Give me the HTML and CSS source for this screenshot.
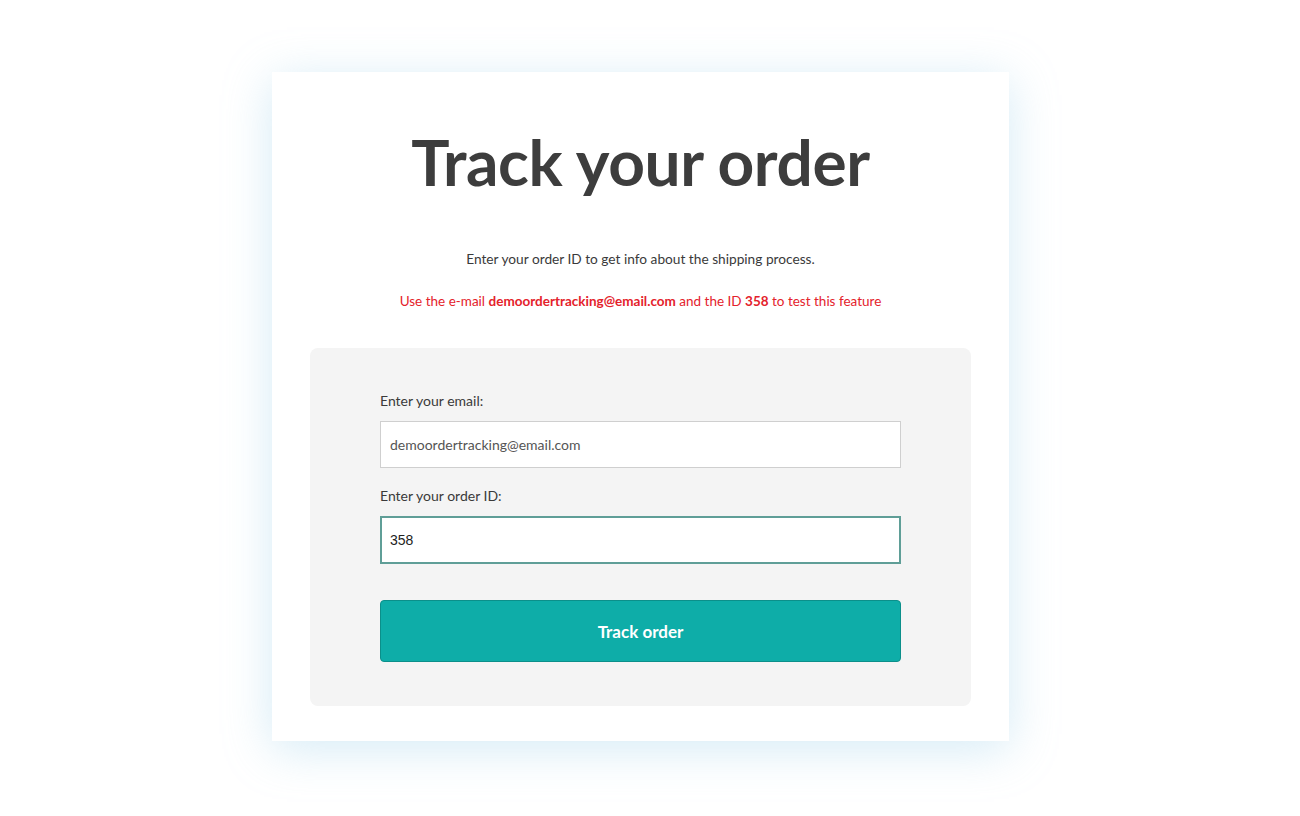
FILE: index.html
```html
<!DOCTYPE html>
<html lang="en">
<head>
    <meta charset="UTF-8">
    <meta name="viewport" content="width=device-width, initial-scale=1.0">
    <title>Track your order</title>
    <link rel="stylesheet" href="styles.css">
</head>
<body>
    <div class="page">
        <div class="card">
            <h1 class="title">Track your order</h1>
            <p class="intro">Enter your order ID to get info about the shipping process.</p>
            <p class="demo-note">Use the e-mail <strong>demoordertracking@email.com</strong> and the ID <strong>358</strong> to test this feature</p>

            <form class="track-form">
                <div class="form-group">
                    <label for="email">Enter your email:</label>
                    <input type="email" id="email" value="demoordertracking@email.com">
                </div>
                <div class="form-group">
                    <label for="orderId">Enter your order ID:</label>
                    <input type="text" id="orderId" class="is-focused" value="358">
                </div>
                <button type="submit" class="track-btn">Track order</button>
            </form>
        </div>
    </div>
</body>
</html>
```

FILE: styles.css
```css
:root {
    --text-dark: #3d3d3d;
    --text-body: #3a3a3a;
    --demo-red: #e4222b;
    --panel-bg: #f4f4f4;
    --teal: #0eada8;
    --teal-border: #0b8f8a;
    --focus-border: #5f9e97;
}

body {
    margin: 0;
    background-color: #ffffff;
    font-family: Lato, "Open Sans", sans-serif;
    color: var(--text-body);
}

.page {
    display: flex;
    justify-content: flex-start;
    padding: 72px 0 75px 272px;
}

.card {
    width: 737px;
    height: 669px;
    box-sizing: border-box;
    padding: 0 38px;
    background-color: #ffffff;
    box-shadow: 0 8px 44px rgba(150, 205, 232, 0.4);
}

.title {
    margin: 58px 0 0;
    text-align: center;
    font-size: 64px;
    line-height: 64px;
    font-weight: 700;
    letter-spacing: -0.4px;
    color: var(--text-dark);
}

.intro {
    margin: 56px 0 0;
    text-align: center;
    font-size: 13.7px;
    line-height: 18px;
}

.demo-note {
    margin: 24px 0 0;
    text-align: center;
    font-size: 13.5px;
    line-height: 18px;
    color: var(--demo-red);
}

.demo-note strong {
    font-weight: 700;
}

.track-form {
    margin-top: 38px;
    padding: 45px 70px 44px;
    background-color: var(--panel-bg);
    border-radius: 8px;
    display: flex;
    flex-direction: column;
}

.form-group {
    display: flex;
    flex-direction: column;
    gap: 12px;
    margin-bottom: 20px;
}

label {
    font-size: 14px;
    line-height: 16px;
    color: var(--text-body);
}

input {
    height: 47px;
    box-sizing: border-box;
    padding: 0 9px;
    border: 1px solid #cfcfcf;
    background-color: #ffffff;
    font-family: Lato, "Open Sans", sans-serif;
    font-size: 14px;
    color: #555555;
    outline: none;
}

input.is-focused {
    height: 48px;
    border: 2px solid var(--focus-border);
    padding: 0 8px;
    color: #222222;
    font-family: Arial, "Liberation Sans", sans-serif;
}

.track-btn {
    margin-top: 16px;
    height: 62px;
    border: 1px solid var(--teal-border);
    border-radius: 4px;
    background-color: var(--teal);
    color: #ffffff;
    font-family: Lato, "Open Sans", sans-serif;
    font-size: 17px;
    font-weight: 700;
    cursor: pointer;
}
```
